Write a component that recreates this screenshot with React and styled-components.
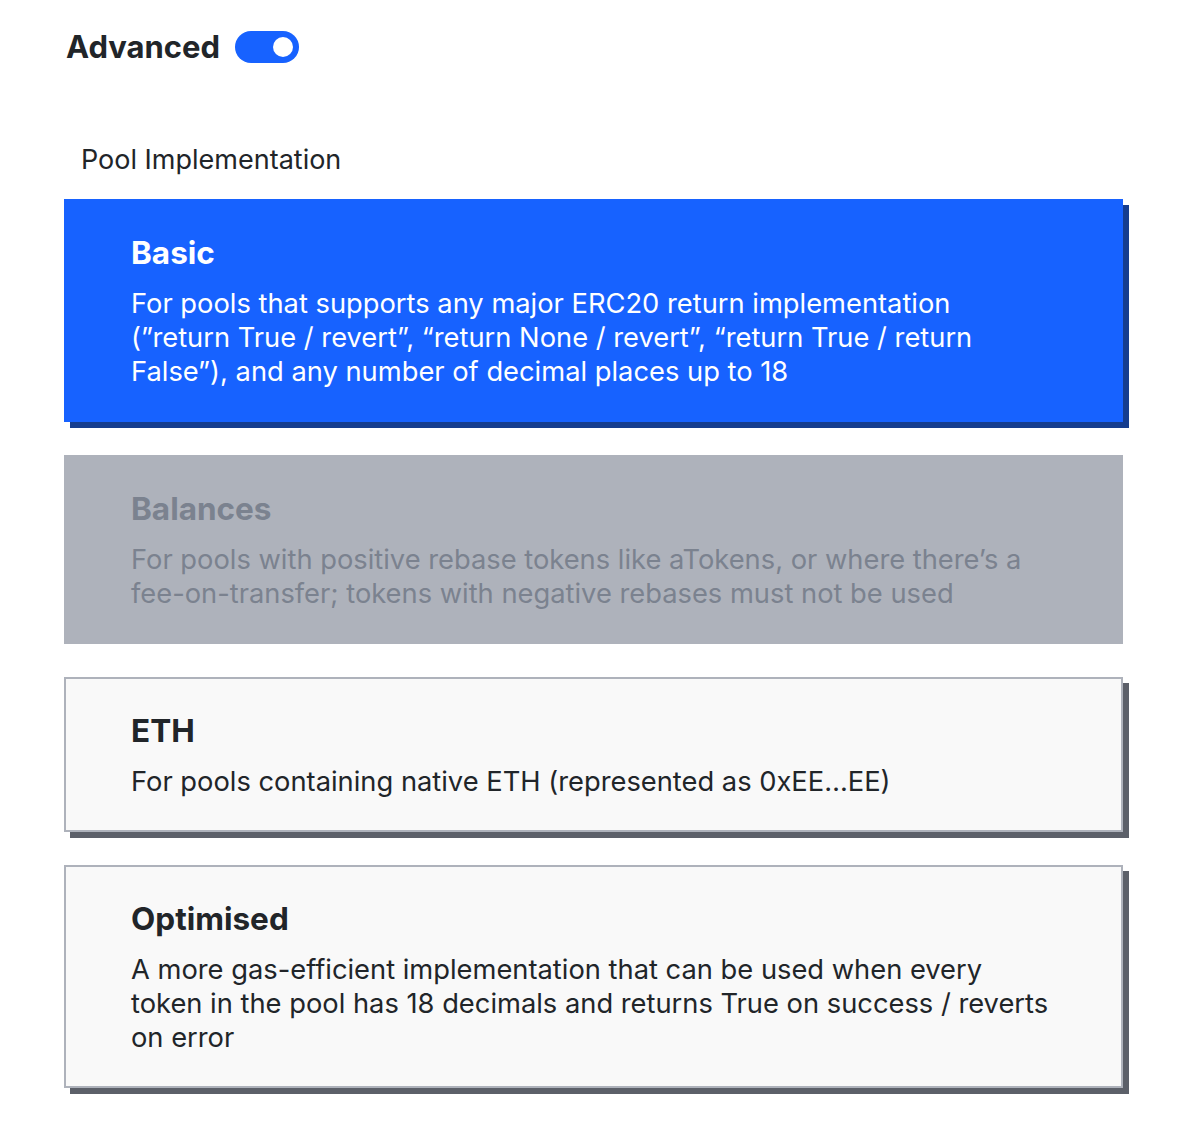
import React, { useState } from 'react';
import styled, { createGlobalStyle } from 'styled-components';

const GlobalStyle = createGlobalStyle`
  html, body {
    margin: 0;
    padding: 0;
    background: #ffffff;
  }
  body {
    font-family: Inter, "Noto Sans", "Liberation Sans", sans-serif;
    color: #212529;
  }
`;

const Page = styled.div`
  width: 1190px;
  padding: 27px 0 40px 64px;
  box-sizing: border-box;
`;

const Header = styled.div`
  display: flex;
  align-items: center;
  gap: 15px;
  height: 40px;
  padding-left: 2px;
`;

const HeaderTitle = styled.h2`
  margin: 0;
  font-size: 31px;
  font-weight: 700;
  line-height: 40px;
  color: #212529;
`;

const Toggle = styled.button`
  position: relative;
  width: 64px;
  height: 32px;
  border: none;
  border-radius: 16px;
  padding: 0;
  cursor: pointer;
  background: ${({ $on }) => ($on ? '#1762ff' : '#c3c7cf')};

  &::after {
    content: '';
    position: absolute;
    top: 6px;
    left: ${({ $on }) => ($on ? '38px' : '6px')};
    width: 20px;
    height: 20px;
    border-radius: 50%;
    background: #ffffff;
  }
`;

const SectionLabel = styled.div`
  margin: 77px 0 0 17px;
  font-size: 27px;
  line-height: 32px;
  color: #212529;
`;

const CardList = styled.div`
  display: flex;
  flex-direction: column;
  gap: 33px;
  width: 1059px;
  margin-top: 23px;
`;

const variants = {
  selected: { bg: '#1762ff', border: '#1762ff', shadow: '#163d8e', title: '#ffffff', text: '#ffffff' },
  disabled: { bg: '#aeb2bb', border: '#aeb2bb', shadow: 'transparent', title: '#7b828f', text: '#7b828f' },
  idle: { bg: '#f9f9f9', border: '#aeb2bb', shadow: '#5c6069', title: '#212529', text: '#212529' },
};

const Card = styled.div`
  box-sizing: border-box;
  padding: 32px 68px 31px 65px;
  border: 2px solid ${({ $variant }) => variants[$variant].border};
  background: ${({ $variant }) => variants[$variant].bg};
  box-shadow: 6px 6px 0 0 ${({ $variant }) => variants[$variant].shadow};
  cursor: ${({ $variant }) => ($variant === 'disabled' ? 'not-allowed' : 'pointer')};
`;

const CardTitle = styled.div`
  font-size: 31.5px;
  font-weight: 700;
  line-height: 40px;
  color: ${({ $variant }) => variants[$variant].title};
`;

const CardText = styled.p`
  margin: 14px 0 0;
  font-size: 27.3px;
  line-height: 34px;
  color: ${({ $variant }) => variants[$variant].text};
`;

const options = [
  {
    id: 'basic',
    title: 'Basic',
    text: 'For pools that supports any major ERC20 return implementation (\u201dreturn True / revert\u201d, \u201creturn None / revert\u201d, \u201creturn True / return False\u201d), and any number of decimal places up to 18',
  },
  {
    id: 'balances',
    title: 'Balances',
    text: 'For pools with positive rebase tokens like aTokens, or where there\u2019s a fee-on-transfer; tokens with negative rebases must not be used',
    disabled: true,
  },
  {
    id: 'eth',
    title: 'ETH',
    text: 'For pools containing native ETH (represented as 0xEE\u2026EE)',
  },
  {
    id: 'optimised',
    title: 'Optimised',
    text: 'A more gas-efficient implementation that can be used when every token in the pool has 18 decimals and returns True on success / reverts on error',
  },
];

export default function App() {
  const [advanced, setAdvanced] = useState(true);
  const [selected, setSelected] = useState('basic');

  return (
    <Page>
      <GlobalStyle />
      <Header>
        <HeaderTitle>Advanced</HeaderTitle>
        <Toggle $on={advanced} onClick={() => setAdvanced(!advanced)} aria-label="Advanced" />
      </Header>
      <SectionLabel>Pool Implementation</SectionLabel>
      <CardList>
        {options.map((o) => {
          const variant = o.disabled ? 'disabled' : selected === o.id ? 'selected' : 'idle';
          return (
            <Card key={o.id} $variant={variant} onClick={() => !o.disabled && setSelected(o.id)}>
              <CardTitle $variant={variant}>{o.title}</CardTitle>
              <CardText $variant={variant}>{o.text}</CardText>
            </Card>
          );
        })}
      </CardList>
    </Page>
  );
}
